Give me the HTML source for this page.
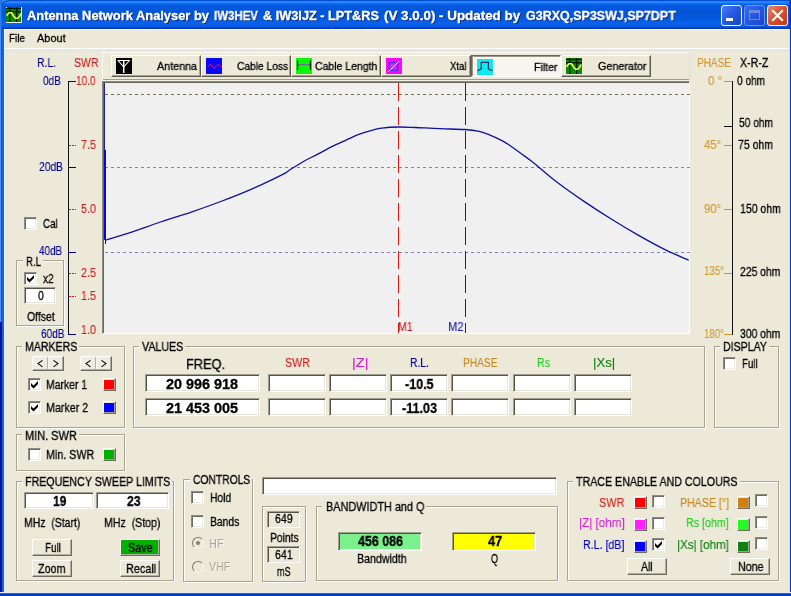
<!DOCTYPE html>
<html>
<head>
<meta charset="utf-8">
<title>Antenna Network Analyser</title>
<style>
html,body{margin:0;padding:0;}
body{width:791px;height:596px;overflow:hidden;background:#ece9d8;font-family:"Liberation Sans",sans-serif;font-size:12px;color:#000;position:relative;}
.a{position:absolute;white-space:nowrap;line-height:1;}
.x{position:absolute;white-space:pre;line-height:16px;height:16px;transform-origin:0 0;will-change:transform;-webkit-text-stroke:0.3px;}
#win{position:absolute;left:0;top:0;width:791px;height:596px;background:#ece9d8;overflow:hidden;}
#titlebar{position:absolute;left:0;top:0;width:791px;height:29px;background:linear-gradient(to bottom,#0046c4 0,#0a58e0 1px,#2a8afc 1.6px,#2686fa 2.4px,#0c66ee 4px,#0559de 6px,#0355d6 12px,#0458dc 18px,#0a62ee 24px,#0858e2 26.5px,#0a3cb8 28.2px,#0030a0 29px);}
#bl{position:absolute;left:0;top:29px;width:5px;height:567px;background:linear-gradient(to right,#0a50d4 0,#0a50d4 1px,#1860e2 2.5px,#1a62e6 4px,#eaf0fc 4px);}
#bl1{position:absolute;left:0;top:29px;width:1px;height:293px;background:#4a92fa;}
#bl2{position:absolute;left:0;top:322px;width:2px;height:274px;background:linear-gradient(to right,#000e94 0,#00129c 1.4px,#0a40c8 2px);}
#br{position:absolute;left:789px;top:29px;width:2px;height:567px;background:linear-gradient(to right,#c8d8f8 0,#c8d8f8 0.8px,#0a3cc8 1px);}
#bb{position:absolute;left:0;top:592px;width:791px;height:4px;background:linear-gradient(to bottom,#e8eefc 0,#e8eefc 1px,#1a5ee4 1.4px,#0a40c8 2.5px,#002ca8 4px);}
.cap{position:absolute;top:5px;width:21px;height:21px;border-radius:3px;box-sizing:border-box;border:1px solid #fff;}
.fld{position:absolute;box-sizing:border-box;background:#fff;border:1px solid;border-color:#a09e90 #fff #fff #a09e90;box-shadow:inset 1px 1px 0 #55534a, inset -1px -1px 0 #e8e6dc;}
.grp{position:absolute;box-sizing:border-box;border:1px solid #a8a592;box-shadow:1px 1px 0 #fff, inset 1px 1px 0 #fff;}
.btn{position:absolute;box-sizing:border-box;background:#efede0;border:1px solid;border-color:#fff #6e6c60 #6e6c60 #fff;box-shadow:inset -1px -1px 0 #b0ad9c;}
.cb{position:absolute;width:13px;height:13px;box-sizing:border-box;background:#fff;border:1px solid;border-color:#8c8c84 #fff #fff #8c8c84;box-shadow:inset 1px 1px 0 #6c6c64, inset -1px -1px 0 #eeece4;}
.sw{position:absolute;width:13px;height:13px;box-sizing:border-box;border:1px solid;border-color:#fff #6e6c60 #6e6c60 #fff;box-shadow:inset -1px -1px 0 #a09e90, inset 0 1px 0 #ece9d8;}
.tb{position:absolute;top:55px;height:22px;box-sizing:border-box;border:1px solid;border-color:#fff #5e5c50 #5e5c50 #fff;box-shadow:inset -1px -1px 0 #a8a594;background:#ece9d8;}
.tb svg{position:absolute;left:4px;top:2px;}

</style>
</head>
<body>
<div id="win">
<div id="titlebar"></div><div class="a" style="left:0;top:0;width:8px;height:8px;background:radial-gradient(circle at 8px 8px,rgba(0,60,200,0) 6.2px,#0a30b8 7px,#2e8cf0 8px);"></div><div class="a" style="left:789px;top:0;width:2px;height:29px;background:linear-gradient(to right,#0a48c8,#0030a0);"></div><div class="a" style="left:0;top:0;width:2px;height:29px;background:linear-gradient(to right,#3a84f4,#1060e8);"></div><div id="bl"></div><div id="bl1"></div><div id="bl2"></div><div id="br"></div><div id="bb"></div>
<div class="x" style="left:26.5px;top:8px;font-size:12.5px;color:#fff;font-weight:bold;transform:scaleX(1.030);text-shadow:1px 1px 0 #0a2a80;">Antenna Network Analyser by</div>
<div class="x" style="left:214.0px;top:8px;font-size:12.5px;color:#fff;font-weight:bold;transform:scaleX(0.918);text-shadow:1px 1px 0 #0a2a80;">IW3HEV</div>
<div class="x" style="left:262.5px;top:8px;font-size:12.5px;color:#fff;font-weight:bold;transform:scaleX(1.018);text-shadow:1px 1px 0 #0a2a80;">&amp; IW3IJZ - LPT&amp;RS</div>
<div class="x" style="left:383.5px;top:8px;font-size:12.5px;color:#fff;font-weight:bold;transform:scaleX(1.071);text-shadow:1px 1px 0 #0a2a80;">(V 3.0.0) - Updated by</div>
<div class="x" style="left:525.6px;top:8px;font-size:12.5px;color:#fff;font-weight:bold;transform:scaleX(0.998);text-shadow:1px 1px 0 #0a2a80;">G3RXQ,SP3SWJ,SP7DPT</div>
<div class="cap" style="left:721px;background:linear-gradient(135deg,#4a7cf0,#2358e0 50%,#1a45c8);">
  <div class="a" style="left:4px;top:12px;width:7px;height:3px;background:#fff;"></div></div>
<div class="cap" style="left:744px;background:linear-gradient(135deg,#3a6ce8,#2358e0 50%,#1a45c8);border-color:#7090e8;">
  <div class="a" style="left:4px;top:4px;width:11px;height:10px;box-sizing:border-box;border:1px solid #6a8ae6;border-top-width:3px;"></div></div>
<div class="cap" style="left:767px;background:linear-gradient(135deg,#e8886a,#d8502c 50%,#c03a1a);">
  <svg class="a" style="left:3px;top:3px" width="13" height="13" viewBox="0 0 13 13"><path d="M2 2 L11 11 M11 2 L2 11" stroke="#fff" stroke-width="2.2" stroke-linecap="square"/></svg></div>
<svg class="a" style="left:6px;top:7px" width="16" height="16"><rect width="16" height="16" fill="#0c8a0c"/><path d="M0 1.5H16M0 4.8H16" stroke="#021c02" stroke-width="1.5"/><path d="M3.7 0V16M10.6 0V16" stroke="#021802" stroke-width="1.4"/><path d="M0.5 8.6 L3 5.8 L5.6 5.8 L7.6 9 L9.6 11.3 L12 11 L14 8.8 L14.8 6.5" stroke="#e8ff50" stroke-width="1.6" fill="none"/><path d="M15.5 0V15.5H0" stroke="#f0fff0" fill="none"/><path d="M0 0.5H1M0.5 0V1" stroke="#f0fff0"/></svg>
<div class="x" style="left:9.0px;top:30px;font-size:11px;color:#000;transform:scaleX(0.903);">File</div>
<div class="x" style="left:37.4px;top:30px;font-size:11px;color:#000;transform:scaleX(0.995);">About</div>
<div class="a" style="left:5px;top:29px;width:784px;height:1px;background:#f6f8fc;"></div>
<div class="a" style="left:5px;top:48px;width:784px;height:1px;background:#fff;"></div>
<div class="a" style="left:5px;top:49px;width:784px;height:3px;background:#e9e7dd;"></div>
<div class="a" style="left:102px;top:52px;width:588px;height:29px;box-sizing:border-box;border:1px solid;border-color:#fdfdf8 #e2dfd0 #f4f2e8 #fdfdf8;box-shadow:inset 0 -1px 0 #a09c88;"></div>
<div class="tb" style="left:111px;width:90px;"><svg width="16" height="16"><rect width="16" height="16" fill="#000"/><path d="M1.5 2.5H14 M2 2.5L7.7 9 M13.5 2.5L7.7 9" stroke="#fff" fill="none" stroke-width="1.1"/><path d="M7.7 2.5V15" stroke="#fff" stroke-width="1.5"/></svg></div>
<div class="tb" style="left:201px;width:90px;"><svg width="16" height="16"><rect width="16" height="16" fill="#0808f8"/><path d="M1.5 9L4.3 6.2L8.1 10.4L11.9 6.2L15.7 9" stroke="#e01060" fill="none" stroke-width="1"/></svg></div>
<div class="tb" style="left:291px;width:90px;"><svg width="16" height="16"><rect width="16" height="16" fill="#08f808"/><path d="M2 6.6H14" stroke="#607080" stroke-width="1.2"/><path d="M1.6 2.4V12M14.4 2.4V12" stroke="#103010" fill="none" stroke-width="1.3"/></svg></div>
<div class="tb" style="left:381px;width:90px;"><svg width="16" height="16"><rect width="16" height="16" fill="#f808f8"/><rect x="3.2" y="4.5" width="8.4" height="8" fill="#c030f0" stroke="#5030e0" stroke-width="1.3"/><path d="M2.3 13.8L13.3 2.8" stroke="#fff0ff" stroke-width="1"/></svg></div>
<div class="tb" style="left:471px;width:90px;border-color:#6a685c #fff #fff #6a685c;box-shadow:inset 1px 1px 0 #9a988a;background:#f6f5ee;"><svg width="16" height="16" style="left:5px;top:3px"><rect width="16" height="16" fill="#10e8f0"/><path d="M0.5 11.7L4.2 9.8V3.4H11.4V9.8L15.6 11.7" stroke="#203060" fill="none" stroke-width="1.2"/></svg></div>
<div class="tb" style="left:561px;width:90px;"><svg width="16" height="16"><rect width="16" height="16" fill="#0c8a0c"/><path d="M0 1.5H16M0 4.8H16" stroke="#021c02" stroke-width="1.5"/><path d="M3.7 0V16M10.6 0V16" stroke="#021802" stroke-width="1.4"/><path d="M0.5 8.6 L3 5.8 L5.6 5.8 L7.6 9 L9.6 11.3 L12 11 L14 8.8 L14.8 6.5" stroke="#e8ff50" stroke-width="1.6" fill="none"/></svg></div>
<div class="x" style="left:156.8px;top:58px;font-size:11px;color:#000;transform:scaleX(0.978);">Antenna</div>
<div class="x" style="left:236.5px;top:58px;font-size:11px;color:#000;transform:scaleX(0.929);">Cable Loss</div>
<div class="x" style="left:314.8px;top:58px;font-size:11px;color:#000;transform:scaleX(0.953);">Cable Length</div>
<div class="x" style="left:449.8px;top:58px;font-size:11px;color:#000;transform:scaleX(0.865);">Xtal</div>
<div class="x" style="left:534.4px;top:59px;font-size:11px;color:#000;transform:scaleX(0.961);">Filter</div>
<div class="x" style="left:598.3px;top:58px;font-size:11px;color:#000;transform:scaleX(0.981);">Generator</div>
<div class="x" style="left:36.5px;top:55px;font-size:12.5px;color:#000090;transform:scaleX(0.829);-webkit-text-stroke:0.12px;">R.L.</div>
<div class="x" style="left:73.5px;top:55px;font-size:12.5px;color:#c82020;transform:scaleX(0.840);-webkit-text-stroke:0.12px;">SWR</div>
<div class="x" style="left:42.5px;top:73px;font-size:12.5px;color:#000090;transform:scaleX(0.796);-webkit-text-stroke:0.12px;">0dB</div>
<div class="x" style="left:38.5px;top:159px;font-size:12.5px;color:#000090;transform:scaleX(0.822);-webkit-text-stroke:0.12px;">20dB</div>
<div class="x" style="left:39.0px;top:243px;font-size:12.5px;color:#000090;transform:scaleX(0.795);-webkit-text-stroke:0.12px;">40dB</div>
<div class="x" style="left:40.5px;top:326px;font-size:12.5px;color:#000090;transform:scaleX(0.805);-webkit-text-stroke:0.12px;">60dB</div>
<div class="x" style="left:76.0px;top:73px;font-size:12.5px;color:#c82020;transform:scaleX(0.802);-webkit-text-stroke:0.12px;">10.0</div>
<div class="x" style="left:80.6px;top:137px;font-size:12.5px;color:#c82020;transform:scaleX(0.857);-webkit-text-stroke:0.12px;">7.5</div>
<div class="x" style="left:80.6px;top:201px;font-size:12.5px;color:#c82020;transform:scaleX(0.857);-webkit-text-stroke:0.12px;">5.0</div>
<div class="x" style="left:80.6px;top:265px;font-size:12.5px;color:#c82020;transform:scaleX(0.857);-webkit-text-stroke:0.12px;">2.5</div>
<div class="x" style="left:80.6px;top:288px;font-size:12.5px;color:#c82020;transform:scaleX(0.857);-webkit-text-stroke:0.12px;">1.5</div>
<div class="x" style="left:80.6px;top:322px;font-size:12.5px;color:#c82020;transform:scaleX(0.857);-webkit-text-stroke:0.12px;">1.0</div>
<svg class="a" style="left:60px;top:78px" width="44" height="260" shape-rendering="crispEdges">
 <rect x="8" y="3" width="1" height="254" fill="#101020"/>
 <rect x="8" y="3" width="8" height="1" fill="#000090"/>
 <rect x="8" y="89" width="8" height="1" fill="#000090"/>
 <rect x="8" y="174" width="8" height="1" fill="#000090"/>
 <rect x="8" y="256" width="8" height="1" fill="#000090"/>
 <path d="M9 67.5H16M9 131.5H16M9 195.5H16M9 218.5H16" stroke="#d02020" stroke-dasharray="2 1"/>
</svg>
<div class="cb" style="left:24px;top:217px;"></div>
<div class="x" style="left:42.8px;top:216px;font-size:12.5px;color:#000;transform:scaleX(0.789);">Cal</div>
<div class="grp" style="left:16px;top:260px;width:48px;height:66px;"></div>
<div class="a" style="left:23px;top:259px;width:20px;height:4px;background:#ece9d8;"></div>
<div class="x" style="left:26.0px;top:254px;font-size:12.5px;color:#000;transform:scaleX(0.771);">R.L</div>
<div class="cb" style="left:24px;top:272px;"><svg width="13" height="13" style="position:absolute;left:-1px;top:-1px"><path d="M3 5L5.5 7.5L10 3V6L5.5 10.5L3 8Z" fill="#000"/></svg></div>
<div class="x" style="left:42.8px;top:271px;font-size:12.5px;color:#000;transform:scaleX(0.803);">x2</div>
<div class="fld" style="left:24px;top:287px;width:32px;height:17px;background:#fff;"></div>
<div class="x" style="left:37.5px;top:288px;font-size:12.5px;color:#000;transform:scaleX(0.834);">0</div>
<div class="x" style="left:26.5px;top:309px;font-size:12.5px;color:#000;transform:scaleX(0.836);">Offset</div>
<div class="a" style="left:102px;top:81px;width:588px;height:253px;background:#f0f0f0;box-sizing:border-box;border:1px solid;border-color:#8a8878 #fff #fff #8a8878;box-shadow:inset 1px 1px 0 #6a685c;"></div>
<svg class="a" style="left:103px;top:81px" width="587" height="253">
 <g shape-rendering="crispEdges">
 <path d="M2 13.5H587" stroke="#807040" stroke-dasharray="3 3"/>
 <path d="M2 86.5H587M2 171.5H587" stroke="#8080bc" stroke-dasharray="3 3"/>
 <path d="M295.5 2V252" stroke="#d81818" stroke-dasharray="18 6"/>
 <path d="M362.5 2V252" stroke="#1818b0" stroke-dasharray="18 6"/>
 <rect x="1" y="2" width="1" height="67" fill="#2020a0"/>
 <rect x="1" y="69" width="2" height="90" fill="#0808d0"/><rect x="2" y="158" width="1" height="5" fill="#101080"/>
 </g>
 <path d="M2.4 159.1 C6.5 157.8,18.0 154.6,27.2 151.6 C36.4 148.6,47.3 144.4,57.4 141.0 C67.5 137.6,77.5 134.7,87.6 131.3 C97.7 127.9,107.7 124.3,117.8 120.5 C127.9 116.7,137.9 112.8,148.0 108.4 C158.1 104.0,171.8 97.5,178.3 94.2 C184.8 90.9,183.2 91.1,187.0 88.8 C190.8 86.5,196.3 82.8,200.9 80.2 C205.5 77.6,210.2 75.6,214.8 73.2 C219.4 70.8,224.1 68.0,228.7 65.7 C233.3 63.4,238.0 61.4,242.6 59.3 C247.2 57.2,251.9 54.9,256.5 53.2 C261.1 51.4,266.7 49.8,270.4 48.8 C274.1 47.8,274.6 47.6,278.8 47.1 C283.0 46.6,289.9 46.1,295.5 46.0 C301.1 45.9,305.2 46.2,312.2 46.5 C319.1 46.8,328.9 47.4,337.2 47.7 C345.5 48.0,355.7 48.1,362.2 48.5 C368.7 48.9,372.1 49.5,376.2 50.4 C380.3 51.3,383.3 52.6,387.0 54.1 C390.7 55.6,395.3 57.7,398.4 59.3 C401.5 60.9,401.0 60.4,405.8 63.7 C410.6 67.0,422.2 75.5,427.3 79.3 C432.3 83.1,431.6 82.8,436.1 86.5 C440.6 90.2,446.6 95.7,454.1 101.3 C461.6 107.0,472.0 114.3,481.0 120.4 C490.0 126.5,498.8 132.2,507.8 137.8 C516.8 143.4,525.8 148.8,534.7 153.9 C543.7 159.0,553.0 164.2,561.5 168.4 C570.0 172.6,581.7 177.4,585.7 179.2" stroke="#1010a0" stroke-width="1.3" fill="none"/>
</svg>
<div class="x" style="left:397.5px;top:319px;font-size:12.5px;color:#c82020;transform:scaleX(0.835);-webkit-text-stroke:0.12px;">M1</div>
<div class="x" style="left:447.5px;top:319px;font-size:12.5px;color:#2020b0;transform:scaleX(0.893);-webkit-text-stroke:0.12px;">M2</div>
<div class="x" style="left:697.0px;top:55px;font-size:12.5px;color:#d09830;transform:scaleX(0.802);-webkit-text-stroke:0.12px;">PHASE</div>
<div class="x" style="left:739.6px;top:55px;font-size:12.5px;color:#000;transform:scaleX(0.852);">X-R-Z</div>
<div class="x" style="left:708.0px;top:73px;font-size:12.5px;color:#d09830;transform:scaleX(0.908);-webkit-text-stroke:0.12px;">0 °</div>
<div class="x" style="left:704.0px;top:137px;font-size:12.5px;color:#d09830;transform:scaleX(0.899);-webkit-text-stroke:0.12px;">45°</div>
<div class="x" style="left:704.0px;top:201px;font-size:12.5px;color:#d09830;transform:scaleX(0.899);-webkit-text-stroke:0.12px;">90°</div>
<div class="x" style="left:704.0px;top:263px;font-size:12.5px;color:#d09830;transform:scaleX(0.774);-webkit-text-stroke:0.12px;">135°</div>
<div class="x" style="left:704.0px;top:326px;font-size:12.5px;color:#d09830;transform:scaleX(0.774);-webkit-text-stroke:0.12px;">180°</div>
<div class="x" style="left:737.0px;top:73px;font-size:12.5px;color:#000;transform:scaleX(0.806);">0 ohm</div>
<div class="x" style="left:739.0px;top:115px;font-size:12.5px;color:#000;transform:scaleX(0.815);">50 ohm</div>
<div class="x" style="left:738.0px;top:137px;font-size:12.5px;color:#000;transform:scaleX(0.839);">75 ohm</div>
<div class="x" style="left:739.5px;top:201px;font-size:12.5px;color:#000;transform:scaleX(0.839);">150 ohm</div>
<div class="x" style="left:740.0px;top:264px;font-size:12.5px;color:#000;transform:scaleX(0.828);">225 ohm</div>
<div class="x" style="left:740.0px;top:326px;font-size:12.5px;color:#000;transform:scaleX(0.828);">300 ohm</div>
<svg class="a" style="left:720px;top:78px" width="20" height="260" shape-rendering="crispEdges">
 <rect x="12" y="3" width="1" height="254" fill="#101010"/>
 <rect x="4" y="3" width="8" height="1" fill="#d09830"/>
 <rect x="4" y="67" width="8" height="1" fill="#d09830"/>
 <rect x="4" y="131" width="8" height="1" fill="#d09830"/>
 <rect x="4" y="195" width="8" height="1" fill="#d09830"/>
 <rect x="4" y="256" width="8" height="1" fill="#d09830"/>
 <rect x="4" y="48" width="8" height="1" fill="#101010"/>
</svg>
<div class="grp" style="left:16px;top:346px;width:109px;height:82px;"></div>
<div class="a" style="left:22px;top:345px;width:57px;height:4px;background:#ece9d8;"></div>
<div class="x" style="left:25.2px;top:339px;font-size:12.5px;color:#000;transform:scaleX(0.846);">MARKERS</div>
<div class="btn" style="left:32px;top:356px;width:32px;height:15px;"></div>
<div class="a" style="left:47px;top:357px;width:1px;height:12px;background:#b4b1a0;"></div>
<div class="a" style="left:48px;top:357px;width:1px;height:12px;background:#f8f7f0;"></div>
<div class="btn" style="left:80px;top:356px;width:32px;height:15px;"></div>
<div class="a" style="left:95px;top:357px;width:1px;height:12px;background:#b4b1a0;"></div>
<div class="a" style="left:96px;top:357px;width:1px;height:12px;background:#f8f7f0;"></div>
<svg class="a" style="left:32px;top:356px" width="16" height="15"><path d="M10.5 4.3L6 7.6L10.5 10.9" stroke="#000" fill="none" stroke-width="1.05"/></svg>
<svg class="a" style="left:48px;top:356px" width="16" height="15"><path d="M5.5 4.3L10 7.6L5.5 10.9" stroke="#000" fill="none" stroke-width="1.05"/></svg>
<svg class="a" style="left:80px;top:356px" width="16" height="15"><path d="M10.5 4.3L6 7.6L10.5 10.9" stroke="#000" fill="none" stroke-width="1.05"/></svg>
<svg class="a" style="left:96px;top:356px" width="16" height="15"><path d="M5.5 4.3L10 7.6L5.5 10.9" stroke="#000" fill="none" stroke-width="1.05"/></svg>
<div class="cb" style="left:28px;top:378px;"><svg width="13" height="13" style="position:absolute;left:-1px;top:-1px"><path d="M3 5L5.5 7.5L10 3V6L5.5 10.5L3 8Z" fill="#000"/></svg></div>
<div class="x" style="left:45.8px;top:377px;font-size:12.5px;color:#000;transform:scaleX(0.835);">Marker 1</div>
<div class="sw" style="left:103px;top:378px;background:#ff0000;"></div>
<div class="cb" style="left:28px;top:401px;"><svg width="13" height="13" style="position:absolute;left:-1px;top:-1px"><path d="M3 5L5.5 7.5L10 3V6L5.5 10.5L3 8Z" fill="#000"/></svg></div>
<div class="x" style="left:45.8px;top:400px;font-size:12.5px;color:#000;transform:scaleX(0.856);">Marker 2</div>
<div class="sw" style="left:103px;top:401px;background:#0000ff;"></div>
<div class="grp" style="left:16px;top:434px;width:109px;height:37px;"></div>
<div class="a" style="left:22px;top:433px;width:57px;height:4px;background:#ece9d8;"></div>
<div class="x" style="left:25.2px;top:428px;font-size:12.5px;color:#000;transform:scaleX(0.878);">MIN. SWR</div>
<div class="cb" style="left:28px;top:448px;"></div>
<div class="x" style="left:45.8px;top:447px;font-size:12.5px;color:#000;transform:scaleX(0.857);">Min. SWR</div>
<div class="sw" style="left:103px;top:448px;background:#00b000;"></div>
<div class="grp" style="left:133px;top:346px;width:572px;height:82px;"></div>
<div class="a" style="left:139px;top:345px;width:46px;height:4px;background:#ece9d8;"></div>
<div class="x" style="left:141.7px;top:339px;font-size:12.5px;color:#000;transform:scaleX(0.853);">VALUES</div>
<div class="x" style="left:185.5px;top:356px;font-size:14px;color:#000;transform:scaleX(0.912);">FREQ.</div>
<div class="x" style="left:284.5px;top:355px;font-size:12px;color:#d02020;transform:scaleX(0.893);-webkit-text-stroke:0.12px;">SWR</div>
<div class="x" style="left:352.0px;top:355px;font-size:12px;color:#d020d0;transform:scaleX(1.216);-webkit-text-stroke:0.12px;">|Z|</div>
<div class="x" style="left:409.5px;top:355px;font-size:12px;color:#0000a0;transform:scaleX(0.854);-webkit-text-stroke:0.12px;">R.L.</div>
<div class="x" style="left:462.6px;top:355px;font-size:12px;color:#c88820;transform:scaleX(0.846);-webkit-text-stroke:0.12px;">PHASE</div>
<div class="x" style="left:536.5px;top:355px;font-size:12px;color:#20d020;transform:scaleX(0.886);-webkit-text-stroke:0.12px;">Rs</div>
<div class="x" style="left:592.5px;top:355px;font-size:12px;color:#108010;transform:scaleX(1.097);-webkit-text-stroke:0.12px;">|Xs|</div>
<div class="fld" style="left:145px;top:374px;width:115px;height:18px;background:#fff;"></div>
<div class="fld" style="left:268px;top:374px;width:58px;height:18px;background:#fff;"></div>
<div class="fld" style="left:329px;top:374px;width:58px;height:18px;background:#fff;"></div>
<div class="fld" style="left:390px;top:374px;width:58px;height:18px;background:#fff;"></div>
<div class="fld" style="left:451px;top:374px;width:58px;height:18px;background:#fff;"></div>
<div class="fld" style="left:513px;top:374px;width:58px;height:18px;background:#fff;"></div>
<div class="fld" style="left:574px;top:374px;width:58px;height:18px;background:#fff;"></div>
<div class="fld" style="left:145px;top:398px;width:115px;height:18px;background:#fff;"></div>
<div class="fld" style="left:268px;top:398px;width:58px;height:18px;background:#fff;"></div>
<div class="fld" style="left:329px;top:398px;width:58px;height:18px;background:#fff;"></div>
<div class="fld" style="left:390px;top:398px;width:58px;height:18px;background:#fff;"></div>
<div class="fld" style="left:451px;top:398px;width:58px;height:18px;background:#fff;"></div>
<div class="fld" style="left:513px;top:398px;width:58px;height:18px;background:#fff;"></div>
<div class="fld" style="left:574px;top:398px;width:58px;height:18px;background:#fff;"></div>
<div class="x" style="left:166.0px;top:376px;font-size:14px;color:#000;font-weight:bold;transform:scaleX(1.028);">20 996 918</div>
<div class="x" style="left:166.0px;top:400px;font-size:14px;color:#000;font-weight:bold;transform:scaleX(1.028);">21 453 005</div>
<div class="x" style="left:405.0px;top:376px;font-size:14px;color:#000;font-weight:bold;transform:scaleX(0.896);">-10.5</div>
<div class="x" style="left:401.8px;top:400px;font-size:14px;color:#000;font-weight:bold;transform:scaleX(0.899);">-11.03</div>
<div class="grp" style="left:714px;top:346px;width:65px;height:82px;"></div>
<div class="a" style="left:720px;top:345px;width:49px;height:4px;background:#ece9d8;"></div>
<div class="x" style="left:723.3px;top:339px;font-size:12.5px;color:#000;transform:scaleX(0.846);">DISPLAY</div>
<div class="cb" style="left:723px;top:357px;"></div>
<div class="x" style="left:741.7px;top:356px;font-size:12.5px;color:#000;transform:scaleX(0.774);">Full</div>
<div class="grp" style="left:16px;top:481px;width:158px;height:100px;"></div>
<div class="a" style="left:22px;top:480px;width:150px;height:4px;background:#ece9d8;"></div>
<div class="x" style="left:25.0px;top:474px;font-size:12.5px;color:#000;transform:scaleX(0.853);">FREQUENCY SWEEP LIMITS</div>
<div class="fld" style="left:24px;top:492px;width:70px;height:17px;background:#fff;"></div>
<div class="x" style="left:52.8px;top:493px;font-size:14px;color:#000;font-weight:bold;transform:scaleX(0.860);">19</div>
<div class="fld" style="left:96px;top:492px;width:73px;height:17px;background:#fff;"></div>
<div class="x" style="left:126.7px;top:493px;font-size:14px;color:#000;font-weight:bold;transform:scaleX(0.880);">23</div>
<div class="x" style="left:24.2px;top:515px;font-size:12.5px;color:#000;transform:scaleX(0.836);">MHz  (Start)</div>
<div class="x" style="left:103.7px;top:515px;font-size:12.5px;color:#000;transform:scaleX(0.847);">MHz  (Stop)</div>
<div class="btn" style="left:32px;top:539px;width:40px;height:17px;background:#ece9d8;"></div>
<div class="x" style="left:44.6px;top:540px;font-size:12.5px;color:#000;transform:scaleX(0.789);">Full</div>
<div class="btn" style="left:32px;top:560px;width:40px;height:17px;background:#ece9d8;"></div>
<div class="x" style="left:37.8px;top:561px;font-size:12.5px;color:#000;transform:scaleX(0.861);">Zoom</div>
<div class="btn" style="left:120px;top:539px;width:40px;height:17px;background:#00b000;"></div>
<div class="x" style="left:128.0px;top:540px;font-size:12.5px;color:#000;transform:scaleX(0.867);">Save</div>
<div class="btn" style="left:120px;top:560px;width:40px;height:17px;background:#ece9d8;"></div>
<div class="x" style="left:125.6px;top:561px;font-size:12.5px;color:#000;transform:scaleX(0.867);">Recall</div>
<div class="grp" style="left:183px;top:479px;width:70px;height:103px;"></div>
<div class="a" style="left:190px;top:478px;width:62px;height:4px;background:#ece9d8;"></div>
<div class="x" style="left:192.8px;top:472px;font-size:12.5px;color:#000;transform:scaleX(0.824);">CONTROLS</div>
<div class="cb" style="left:191px;top:491px;"></div>
<div class="x" style="left:209.8px;top:490px;font-size:12.5px;color:#000;transform:scaleX(0.825);">Hold</div>
<div class="cb" style="left:191px;top:515px;"></div>
<div class="x" style="left:209.8px;top:514px;font-size:12.5px;color:#000;transform:scaleX(0.824);">Bands</div>
<div class="a" style="left:192px;top:537px;width:12px;height:12px;border-radius:50%;box-sizing:border-box;background:#ece9d8;border:1.6px solid;border-color:#7c7a6c #f8f7f0 #f8f7f0 #7c7a6c;transform:rotate(0deg);"></div>
<div class="a" style="left:196px;top:541px;width:4px;height:4px;border-radius:50%;background:#848272;"></div>
<div class="a" style="left:192px;top:561px;width:12px;height:12px;border-radius:50%;box-sizing:border-box;background:#ece9d8;border:1.6px solid;border-color:#7c7a6c #f8f7f0 #f8f7f0 #7c7a6c;transform:rotate(0deg);"></div>
<div class="x" style="left:209.0px;top:536px;font-size:12.5px;color:#aca899;transform:scaleX(0.870);text-shadow:1px 1px 0 #fff;-webkit-text-stroke:0.12px;">HF</div>
<div class="x" style="left:209.0px;top:559px;font-size:12.5px;color:#aca899;transform:scaleX(0.852);text-shadow:1px 1px 0 #fff;-webkit-text-stroke:0.12px;">VHF</div>
<div class="fld" style="left:262px;top:477px;width:295px;height:18px;background:#fff;"></div>
<div class="grp" style="left:262px;top:506px;width:44px;height:76px;"></div>
<div class="fld" style="left:267px;top:511px;width:33px;height:17px;background:#ece9d8;"></div>
<div class="x" style="left:275.4px;top:511px;font-size:12.5px;color:#000;transform:scaleX(0.844);">649</div>
<div class="x" style="left:269.6px;top:530px;font-size:12.5px;color:#000;transform:scaleX(0.826);">Points</div>
<div class="fld" style="left:267px;top:546px;width:33px;height:17px;background:#ece9d8;"></div>
<div class="x" style="left:275.4px;top:547px;font-size:12.5px;color:#000;transform:scaleX(0.844);">641</div>
<div class="x" style="left:276.9px;top:564px;font-size:12.5px;color:#000;transform:scaleX(0.725);">mS</div>
<div class="grp" style="left:316px;top:506px;width:242px;height:75px;"></div>
<div class="a" style="left:322px;top:505px;width:104px;height:4px;background:#ece9d8;"></div>
<div class="x" style="left:325.5px;top:499px;font-size:12.5px;color:#000;transform:scaleX(0.870);">BANDWIDTH and Q</div>
<div class="fld" style="left:338px;top:532px;width:84px;height:19px;background:#7cf08c;"></div>
<div class="x" style="left:358.4px;top:533px;font-size:14px;color:#000;font-weight:bold;transform:scaleX(0.889);">456 086</div>
<div class="fld" style="left:452px;top:532px;width:84px;height:19px;background:#ffff00;"></div>
<div class="x" style="left:487.6px;top:533px;font-size:14px;color:#000;font-weight:bold;transform:scaleX(0.912);">47</div>
<div class="x" style="left:356.6px;top:551px;font-size:12.5px;color:#000;transform:scaleX(0.850);">Bandwidth</div>
<div class="x" style="left:491.0px;top:551px;font-size:12.5px;color:#000;transform:scaleX(0.720);">Q</div>
<div class="grp" style="left:567px;top:481px;width:212px;height:100px;"></div>
<div class="a" style="left:573px;top:480px;width:167px;height:4px;background:#ece9d8;"></div>
<div class="x" style="left:576.0px;top:474px;font-size:12.5px;color:#000;transform:scaleX(0.852);">TRACE ENABLE AND COLOURS</div>
<div class="x" style="left:599.4px;top:495px;font-size:12.5px;color:#d02020;transform:scaleX(0.871);-webkit-text-stroke:0.12px;">SWR</div>
<div class="x" style="left:579.0px;top:515px;font-size:12.5px;color:#d020d0;transform:scaleX(0.937);-webkit-text-stroke:0.12px;">|Z| [ohm]</div>
<div class="x" style="left:583.4px;top:537px;font-size:12.5px;color:#0000c0;transform:scaleX(0.851);-webkit-text-stroke:0.12px;">R.L. [dB]</div>
<div class="x" style="left:679.7px;top:495px;font-size:12.5px;color:#c88820;transform:scaleX(0.850);-webkit-text-stroke:0.12px;">PHASE [°]</div>
<div class="x" style="left:686.2px;top:515px;font-size:12.5px;color:#20d020;transform:scaleX(0.852);-webkit-text-stroke:0.12px;">Rs [ohm]</div>
<div class="x" style="left:676.8px;top:537px;font-size:12.5px;color:#108010;transform:scaleX(0.932);-webkit-text-stroke:0.12px;">|Xs| [ohm]</div>
<div class="sw" style="left:634px;top:496px;background:#ff0000;"></div>
<div class="cb" style="left:652px;top:495px;"></div>
<div class="sw" style="left:634px;top:518px;background:#ff20ff;"></div>
<div class="cb" style="left:652px;top:517px;"></div>
<div class="sw" style="left:634px;top:540px;background:#0000ff;"></div>
<div class="cb" style="left:652px;top:538px;"><svg width="13" height="13" style="position:absolute;left:-1px;top:-1px"><path d="M3 5L5.5 7.5L10 3V6L5.5 10.5L3 8Z" fill="#000"/></svg></div>
<div class="sw" style="left:737px;top:496px;background:#d08010;"></div>
<div class="cb" style="left:755px;top:494px;"></div>
<div class="sw" style="left:737px;top:518px;background:#20ff20;"></div>
<div class="cb" style="left:755px;top:516px;"></div>
<div class="sw" style="left:737px;top:540px;background:#108010;"></div>
<div class="cb" style="left:755px;top:537px;"></div>
<div class="btn" style="left:627px;top:558px;width:40px;height:17px;background:#ece9d8;"></div>
<div class="x" style="left:641.0px;top:559px;font-size:12.5px;color:#000;transform:scaleX(0.835);">All</div>
<div class="btn" style="left:730px;top:558px;width:40px;height:17px;background:#ece9d8;"></div>
<div class="x" style="left:737.6px;top:559px;font-size:12.5px;color:#000;transform:scaleX(0.850);">None</div>
</div>
</body>
</html>
